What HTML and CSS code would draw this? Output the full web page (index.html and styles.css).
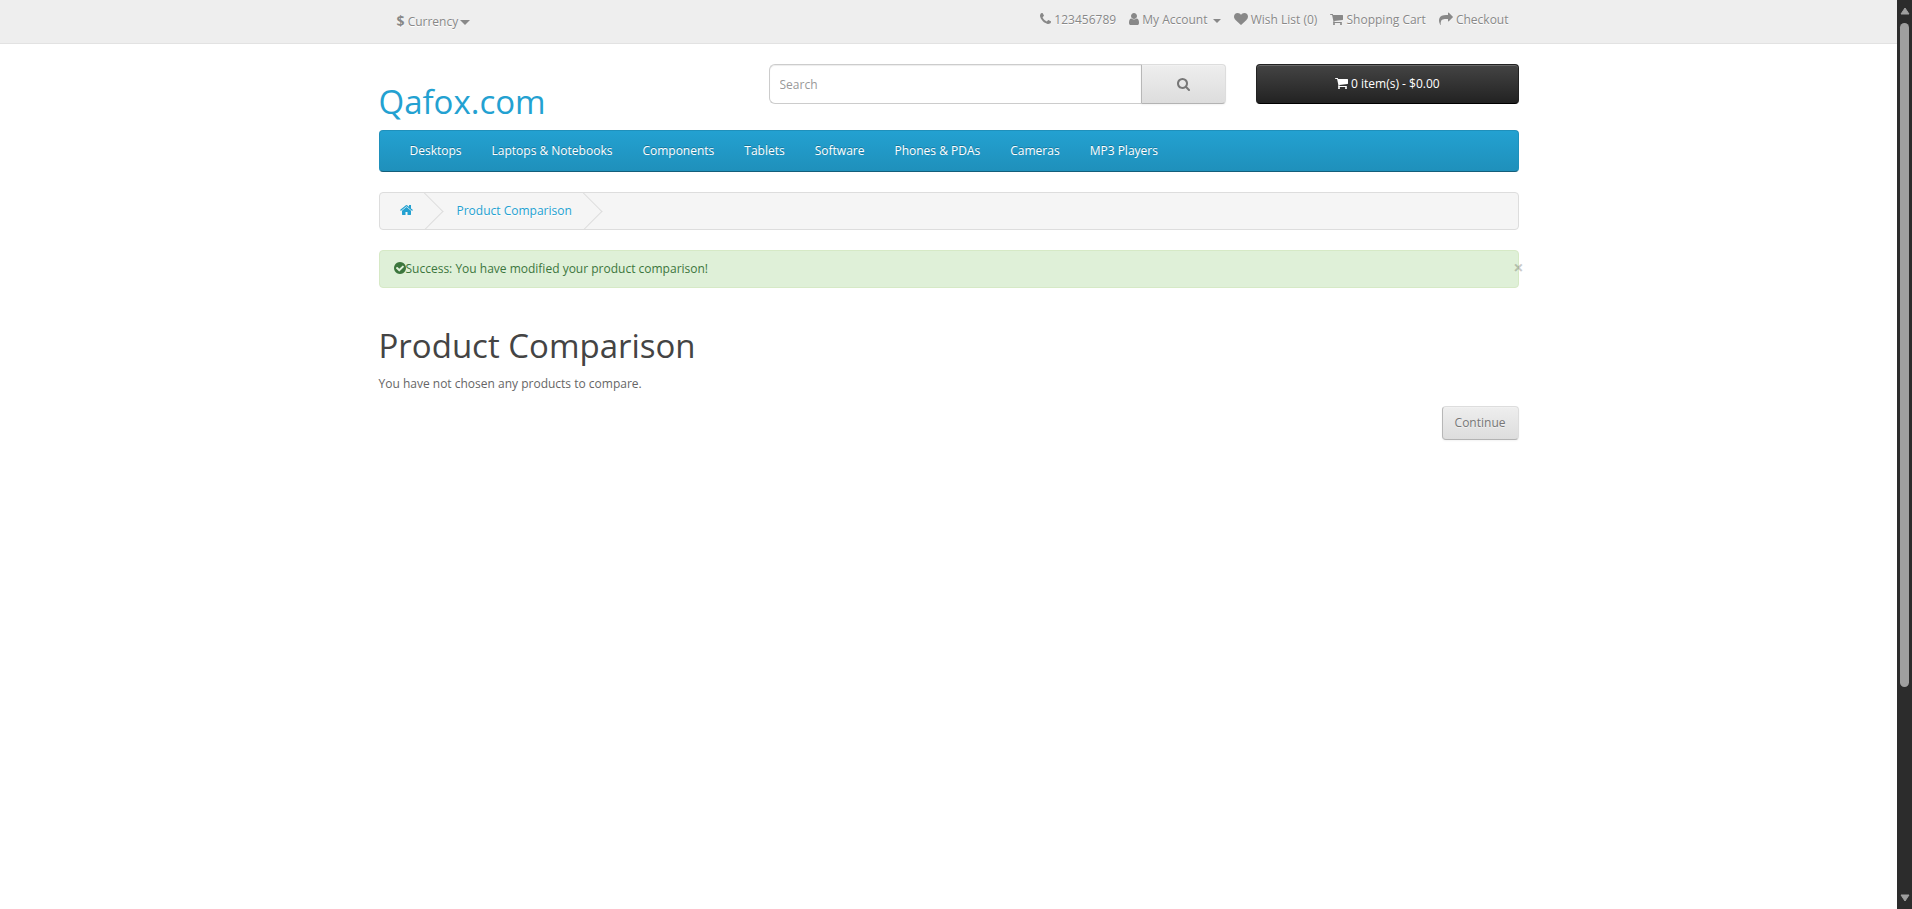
FILE: index.html
```
<!DOCTYPE html>
<html lang="en">
<head>
<meta charset="utf-8">
<title>Product Comparison</title>
<link rel="stylesheet" href="styles.css">
</head>
<body>
<svg class="sprite" aria-hidden="true">
  <symbol id="cart" viewBox="64 0 1664 1792"><path d="M704 1536q0 52-38 90t-90 38-90-38-38-90 38-90 90-38 90 38 38 90zm896 0q0 52-38 90t-90 38-90-38-38-90 38-90 90-38 90 38 38 90zm128-1088v512q0 24-16.5 42.5t-40.5 21.5l-1044 122q13 60 13 70 0 16-24 64h920q26 0 45 19t19 45-19 45-45 19h-1024q-26 0-45-19t-19-45q0-11 8-31.5t16-36 21.5-40 15.5-29.5l-177-823h-204q-26 0-45-19t-19-45 19-45 45-19h256q16 0 28.5 6.5t19.5 15.5 13 24.5 8 26 5.5 29.5 4.5 26h1201q26 0 45 19t19 45z"/></symbol>
</svg>
<div class="page">
  <nav class="top">
    <div class="container top-row">
      <button class="currency" type="button"><strong>$</strong> <span>Currency</span> <span class="caret caret-large"></span></button>
      <ul class="top-links">
        <li><a href="#"><svg class="icon icon-11" viewBox="192 0 1408 1792"><path d="M1600 1240q0 27-10 70.5t-21 68.5q-21 50-122 106-94 51-186 51-27 0-53-3.5t-57.5-12.5-47-14.5-55.5-20.5-49-18q-98-35-175-83-127-79-264-216t-216-264q-48-77-83-175-3-9-18-49t-20.5-55.5-14.5-47-12.5-57.5-3.5-53q0-92 51-186 56-101 106-122 25-11 68.5-21t70.5-10q14 0 21 3 18 6 53 76 11 19 30 54t35 63.5 31 53.5q3 4 17.5 25t21.5 35.5 7 28.5q0 20-28.5 50t-62 55-62 53-28.5 46q0 9 5 22.5t8.5 20.5 14 24 11.5 19q76 137 174 235t235 174q2 1 19 11.5t24 14 20.5 8.5 22.5 5q18 0 46-28.5t53-62 55-62 50-28.5q14 0 28.5 7t35.5 21.5 25 17.5q25 15 53.5 31t63.5 35 54 30q70 35 76 53 3 7 3 21z"/></svg></a> <span>123456789</span></li>
        <li><a href="#"><svg class="icon icon-10" viewBox="256 0 1280 1792"><path d="M1536 1399q0 109-62.5 187t-150.5 78h-854q-88 0-150.5-78t-62.5-187q0-85 8.5-160.5t31.5-152 58.5-131 94-89 134.5-34.5q131 128 313 128t313-128q76 0 134.5 34.5t94 89 58.5 131 31.5 152 8.5 160.5zm-256-887q0 159-112.5 271.5t-271.5 112.5-271.5-112.5-112.5-271.5 112.5-271.5 271.5-112.5 271.5 112.5 112.5 271.5z"/></svg> <span>My Account</span> <span class="caret"></span></a></li>
        <li><a href="#"><svg class="icon icon-14" viewBox="0 0 1792 1792"><path d="M896 1664q-26 0-44-18l-624-602q-10-8-27.5-26t-55.5-65.5-68-97.5-53.5-121-23.5-138q0-220 127-344t351-124q62 0 126.5 21.5t120 58 95.5 68.5 76 68q36-36 76-68t95.5-68.5 120-58 126.5-21.5q224 0 351 124t127 344q0 221-229 450l-623 600q-18 18-44 18z"/></svg> <span>Wish List (0)</span></a></li>
        <li><a href="#"><svg class="icon icon-13"><use href="#cart"/></svg> <span>Shopping Cart</span></a></li>
        <li><a href="#"><svg class="icon icon-14" viewBox="0 0 1792 1792"><path d="M1792 640q0 26-19 45l-512 512q-19 19-45 19t-45-19-19-45v-256h-224q-98 0-175.5 6t-154 21.5-133 42.5-105.5 69.5-80 101-48.5 138.5-17.5 181q0 55 5 123 0 6 2.5 23.5t2.5 26.5q0 15-8.5 25t-23.5 10q-16 0-28-17-7-9-13-22t-13.5-30-10.5-24q-127-285-127-451 0-199 53-333 162-403 875-403h224v-256q0-26 19-45t45-19 45 19l512 512q19 19 19 45z"/></svg> <span>Checkout</span></a></li>
      </ul>
    </div>
  </nav>

  <header class="container header">
    <a class="logo" href="#">Qafox.com</a>
    <form class="search">
      <input type="text" placeholder="Search" aria-label="Search">
      <button type="button" aria-label="Submit search"><svg class="icon icon-13" viewBox="64 0 1664 1792"><path d="M1216 832q0-185-131.5-316.5t-316.5-131.5-316.5 131.5-131.5 316.5 131.5 316.5 316.5 131.5 316.5-131.5 131.5-316.5zm512 832q0 52-38 90t-90 38q-54 0-90-38l-343-342q-179 124-399 124-143 0-273.5-55.5t-225-150-150-225-55.5-273.5 55.5-273.5 150-225 225-150 273.5-55.5 273.5 55.5 225 150 150 225 55.5 273.5q0 220-124 399l343 343q37 37 37 90z"/></svg></button>
    </form>
    <button class="cart" type="button"><svg class="icon icon-13"><use href="#cart"/></svg> <span>0 item(s) - $0.00</span></button>
  </header>

  <div class="container">
    <nav class="menu">
      <a href="#">Desktops</a>
      <a href="#">Laptops &amp; Notebooks</a>
      <a href="#">Components</a>
      <a href="#">Tablets</a>
      <a href="#">Software</a>
      <a href="#">Phones &amp; PDAs</a>
      <a href="#">Cameras</a>
      <a href="#">MP3 Players</a>
    </nav>
  </div>

  <main class="container">
    <ul class="breadcrumb">
      <li><a href="#" aria-label="Home"><svg class="icon icon-13" viewBox="64 0 1664 1792"><path d="M1472 992v480q0 26-19 45t-45 19h-384v-384h-256v384h-384q-26 0-45-19t-19-45v-480q0-1 .5-3t.5-3l575-474 575 474q1 2 1 6zm223-69l-62 74q-8 9-21 11h-3q-13 0-21-7l-692-577-692 577q-12 8-24 7-13-2-21-11l-62-74q-8-10-7-23.5t11-21.5l719-599q32-26 76-26t76 26l244 204v-195q0-14 9-23t23-9h192q14 0 23 9t9 23v408l219 182q10 8 11 21.5t-7 23.5z"/></svg></a></li>
      <li><a href="#">Product Comparison</a></li>
    </ul>
    <div class="alert" role="alert">
      <span class="alert-text"><svg class="icon icon-12" viewBox="128 0 1536 1792"><path d="M1412 734q0-28-18-46l-91-90q-19-19-45-19t-45 19l-408 407-226-226q-19-19-45-19t-45 19l-91 90q-18 18-18 46 0 27 18 45l362 362q19 19 45 19 27 0 46-19l543-543q18-18 18-45zm252 162q0 209-103 385.5t-279.5 279.5-385.5 103-385.5-103-279.5-279.5-103-385.5 103-385.5 279.5-279.5 385.5-103 385.5 103 279.5 279.5 103 385.5z"/></svg>Success: You have modified your product comparison!</span>
      <button class="close" type="button">×</button>
    </div>
    <h1>Product Comparison</h1>
    <p>You have not chosen any products to compare.</p>
    <div class="buttons"><button class="continue" type="button">Continue</button></div>
  </main>
</div>
<div class="scrollbar" aria-hidden="true">
  <svg viewBox="0 0 10 8"><path d="M5 1L9 7H1z"/></svg>
  <div class="track"><div class="thumb"></div></div>
  <svg viewBox="0 0 10 8"><path d="M5 7L9 1H1z"/></svg>
</div>
</body>
</html>
```
FILE: styles.css
```
* { box-sizing: border-box; }

body {
  margin: 0;
  display: flex;
  min-height: 100vh;
  background: #fff;
  color: #666;
  font: 400 12px/20px "Open Sans", sans-serif;
}

button, input { font: inherit; }
button { cursor: pointer; }
a { color: #23a1d1; text-decoration: none; }
.sprite { display: none; }

.page { flex: 1; min-width: 0; }

.container {
  width: 100%;
  max-width: 1170px;
  margin: 0 auto;
  padding: 0 15px;
}

.icon {
  height: 14px;
  vertical-align: -2px;
  fill: currentColor;
}
.icon-10 { width: 10px; }
.icon-11 { width: 11px; }
.icon-12 { width: 12px; }
.icon-13 { width: 13px; }
.icon-14 { width: 14px; }

/* Top bar */
.top {
  min-height: 44px;
  margin-bottom: 20px;
  padding: 4px 0 3px;
  background: #eee;
  border-bottom: 1px solid #e2e2e2;
}
.top-row {
  display: flex;
  justify-content: space-between;
  align-items: flex-start;
}
.top, .top a { color: #888; text-shadow: 0 1px 0 #fff; }
.currency {
  margin-left: 4px;
  padding: 7px 13px;
  background: none;
  border: 1px solid transparent;
  color: inherit;
  line-height: 18px;
  text-shadow: inherit;
}
.currency strong { font-size: 14px; }
.caret {
  display: inline-block;
  margin-left: 2px;
  vertical-align: middle;
  border-top: 4px solid;
  border-left: 4px solid transparent;
  border-right: 4px solid transparent;
}
.caret-large {
  margin-left: -1px;
  border-top-width: 5px;
  border-left-width: 5px;
  border-right-width: 5px;
}
.top-links {
  display: flex;
  gap: 3px;
  margin: 0;
  padding: 6px 5px 0 0;
  list-style: none;
}
.top-links li { padding: 0 5px; }

/* Header */
.header {
  display: grid;
  grid-template-columns: 4fr 5fr 3fr;
  padding: 0;
}
.header > * { margin: 0 15px; }
.logo {
  padding: 20px 0 10px;
  font-size: 33px;
  line-height: 36px;
}
.search { display: flex; height: 40px; }
.search input {
  flex: 1;
  min-width: 0;
  padding: 2px 10px 0;
  border: 1px solid #ccc;
  border-right: 0;
  border-radius: 6px 0 0 6px;
  box-shadow: inset 0 1px 1px rgba(0, 0, 0, .075);
  color: #555;
}
.search input::placeholder { color: #999; opacity: 1; }
.search button, .continue {
  color: #777;
  background: linear-gradient(#eee, #ddd);
  border: 1px solid;
  border-color: #ddd #ddd #b3b3b3 #b7b7b7;
  box-shadow: inset 0 1px 0 rgba(255, 255, 255, .2), 0 1px 2px rgba(0, 0, 0, .05);
  text-shadow: 0 1px 0 rgba(255, 255, 255, .5);
}
.search button { padding: 2px 35px 0; border-radius: 0 4px 4px 0; }
.cart {
  height: 40px;
  padding: 0 10px;
  color: #fff;
  line-height: 18px;
  background: linear-gradient(#444, #222);
  border: 1px solid;
  border-color: #222 #222 #000;
  border-radius: 4px;
  box-shadow: inset 0 1px 0 rgba(255, 255, 255, .2);
}

/* Category menu */
.menu {
  display: flex;
  min-height: 42px;
  margin-bottom: 20px;
  padding: 0 15px;
  background: linear-gradient(#23a1d1, #1f90bb);
  border: 1px solid;
  border-color: #1f90bb #1f90bb #145e7a;
  border-radius: 4px;
}
.menu a {
  padding: 10px 15px;
  color: #fff;
  text-shadow: 0 -1px 0 rgba(0, 0, 0, .25);
}

/* Content */
.breadcrumb {
  display: flex;
  gap: 4px;
  margin: 0 0 20px;
  padding: 0;
  overflow: hidden;
  list-style: none;
  background: #f5f5f5;
  border: 1px solid #ddd;
  border-radius: 4px;
}
.breadcrumb li {
  position: relative;
  padding: 8px 20px;
  text-shadow: 0 1px 0 #fff;
}
.breadcrumb li::after {
  content: "";
  position: absolute;
  top: 5px;
  right: -5px;
  width: 26px;
  height: 26px;
  border-right: 1px solid #ddd;
  border-bottom: 1px solid #ddd;
  transform: rotate(-45deg);
  pointer-events: none;
}
.alert {
  display: flex;
  justify-content: space-between;
  align-items: flex-start;
  margin-bottom: 40px;
  padding: 8px 14px;
  color: #3c763d;
  background: #dff0d8;
  border: 1px solid #d6e9c6;
  border-radius: 4px;
}
.close {
  margin-right: -20px;
  padding: 0;
  background: none;
  border: 0;
  color: #000;
  font-size: 18px;
  font-weight: 700;
  line-height: 16px;
  text-shadow: 0 1px 0 #fff;
  opacity: .2;
}
h1 {
  margin: 0 0 10px;
  color: #444;
  font-size: 33px;
  font-weight: 400;
  line-height: 36px;
}
p { margin: 0 0 12px; }
.buttons { display: flex; justify-content: flex-end; }
.continue {
  padding: 7px 12px;
  line-height: 18px;
  border-radius: 4px;
}

/* Scrollbar */
.scrollbar {
  position: sticky;
  top: 0;
  display: flex;
  flex-direction: column;
  align-items: center;
  width: 15px;
  height: 100vh;
  padding: 7px 0;
  background: #2c2c2c;
}
.scrollbar svg { width: 10px; height: 8px; fill: #9f9f9f; stroke: #9f9f9f; stroke-linejoin: round; }
.track { flex: 1; padding: 8px 0; }
.thumb { width: 9px; height: 77%; max-height: 73vh; background: #9f9f9f; border-radius: 5px; }
```
